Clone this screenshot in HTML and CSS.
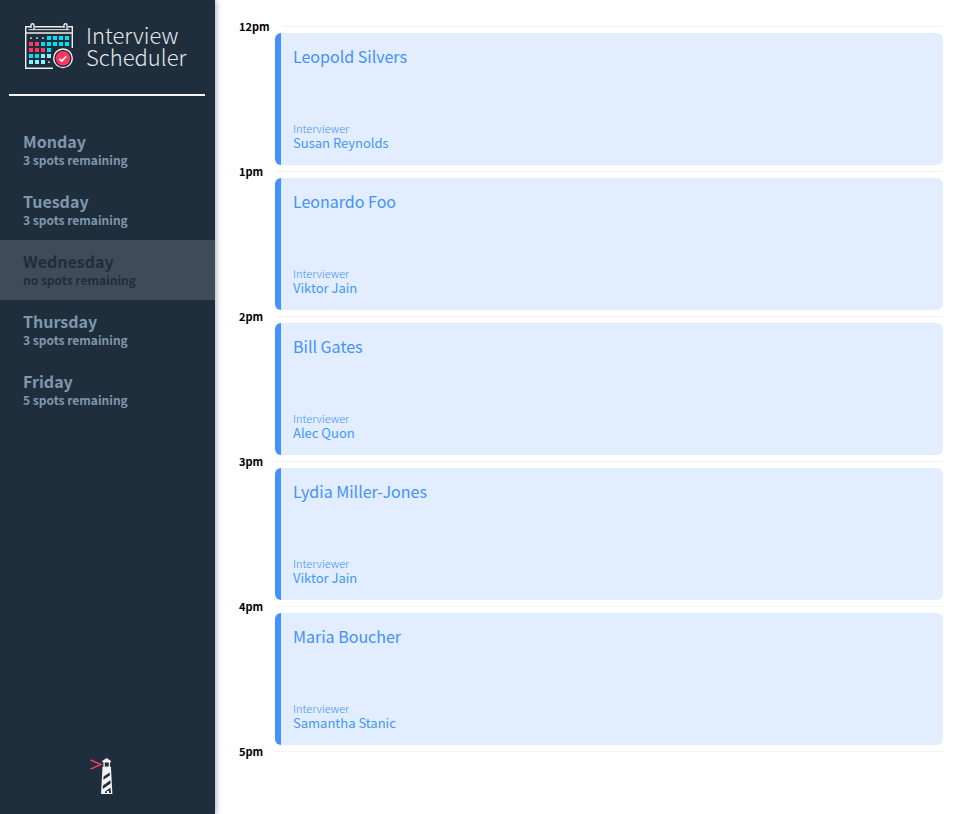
FILE: index.html
```html
<!DOCTYPE html>
<html lang="en">
<head>
<meta charset="utf-8">
<meta name="viewport" content="width=device-width, initial-scale=1">
<title>Interview Scheduler</title>
<link rel="stylesheet" href="styles.css">
</head>
<body>
<div class="layout">
  <aside class="sidebar">
    <div class="brand">
      <svg class="brand__icon" viewBox="24 22 50 48" aria-hidden="true">
        <g fill="none" stroke="#f0f0f0" stroke-width="1.4">
          <path d="M31 26.7H25.7V68.2H53M35 26.7H63.5M68 26.7H72.3V48M25.7 33H72.3"/>
          <path d="M28.5 29.7H69.5" stroke-width="1"/>
          <path d="M31 28V25.2a1.5 1.5 0 0 1 3 0V29.5M64 28V25.2a1.5 1.5 0 0 1 3 0V29.5"/>
        </g>
        <path fill="#f0f0f0" d="M30 37.4h2v1.4h-2zM36 37.4h2v1.4h-2zM42 37.4h2v1.4h-2zM48 61.4h2v1.4h-2z"/>
        <path fill="#00e1f5" d="M47 36h4v4h-4zM53 36h4v4h-4zM59 36h4v4h-4zM65 36h4v4h-4zM41 42h4v4h-4zM47 42h4v4h-4zM53 42h4v4h-4zM59 42h4v4h-4zM65 42h4v4h-4zM47 48h4v4h-4zM29 54h4v4h-4zM35 54h4v4h-4z"/>
        <path fill="#ff375f" d="M29 42h4v4h-4zM35 42h4v4h-4zM29 48h4v4h-4zM35 48h4v4h-4zM41 48h4v4h-4z"/>
        <path fill="#8af3fa" d="M41 54h4v4h-4zM47 54h4v4h-4zM29 60h4v4h-4zM35 60h4v4h-4zM41 60h4v4h-4z"/>
        <circle cx="63" cy="58.3" r="9.3" fill="#1f2e3d" stroke="#f0f0f0" stroke-width="1.4"/>
        <circle cx="63" cy="58.3" r="7.2" fill="#ff375f"/>
        <path d="M59.5 58.8l2.3 2.2 4.4-4.6" fill="none" stroke="#fff" stroke-width="1.6"/>
      </svg>
      <span class="brand__name">Interview<br>Scheduler</span>
    </div>
    <hr class="sidebar__rule">
    <nav class="days">
      <a class="day" href="#monday"><span class="day__name">Monday</span><span class="day__spots">3 spots remaining</span></a>
      <a class="day" href="#tuesday"><span class="day__name">Tuesday</span><span class="day__spots">3 spots remaining</span></a>
      <a class="day day--selected" href="#wednesday" aria-current="true"><span class="day__name">Wednesday</span><span class="day__spots">no spots remaining</span></a>
      <a class="day" href="#thursday"><span class="day__name">Thursday</span><span class="day__spots">3 spots remaining</span></a>
      <a class="day" href="#friday"><span class="day__name">Friday</span><span class="day__spots">5 spots remaining</span></a>
    </nav>
    <svg class="lighthouse" viewBox="88 757 28 38" aria-hidden="true">
      <path d="M90.5 760l10.5 4.5-10.5 4.7" fill="none" stroke="#fa3c5f" stroke-width="1.4"/>
      <path fill="#f2f2f2" d="M106.6 758l4.4 3v1.2h-1v4.6h1v1.6l1.4 25.6h-11.4l1.4-25.6v-1.6h1v-4.6h-1.2v-1.2z"/>
      <path fill="#1f2e3d" d="M104.8 762.6h4v4h-4zM103.6 776.4l6-4 .3 3.2-6.6 4.2zM103 785.4l7.3-5.2.3 3.2-7.9 5.6zM105 793l.2-1.4 5.2-3.8.6 5.2z"/>
      <path fill="#f2f2f2" d="M106.8 791h2.2v2.2h-2.2z"/>
    </svg>
  </aside>
  <main class="schedule">
    <section class="slot">
      <header class="slot__header"><h2 class="slot__time">12pm</h2><hr class="slot__rule"></header>
      <article class="card"><h3 class="card__student">Leopold Silvers</h3><div><h4 class="card__label">Interviewer</h4><p class="card__interviewer">Susan Reynolds</p></div></article>
    </section>
    <section class="slot">
      <header class="slot__header"><h2 class="slot__time">1pm</h2><hr class="slot__rule"></header>
      <article class="card"><h3 class="card__student">Leonardo Foo</h3><div><h4 class="card__label">Interviewer</h4><p class="card__interviewer">Viktor Jain</p></div></article>
    </section>
    <section class="slot">
      <header class="slot__header"><h2 class="slot__time">2pm</h2><hr class="slot__rule"></header>
      <article class="card"><h3 class="card__student">Bill Gates</h3><div><h4 class="card__label">Interviewer</h4><p class="card__interviewer">Alec Quon</p></div></article>
    </section>
    <section class="slot">
      <header class="slot__header"><h2 class="slot__time">3pm</h2><hr class="slot__rule"></header>
      <article class="card"><h3 class="card__student">Lydia Miller-Jones</h3><div><h4 class="card__label">Interviewer</h4><p class="card__interviewer">Viktor Jain</p></div></article>
    </section>
    <section class="slot">
      <header class="slot__header"><h2 class="slot__time">4pm</h2><hr class="slot__rule"></header>
      <article class="card"><h3 class="card__student">Maria Boucher</h3><div><h4 class="card__label">Interviewer</h4><p class="card__interviewer">Samantha Stanic</p></div></article>
    </section>
    <section class="slot">
      <header class="slot__header"><h2 class="slot__time">5pm</h2><hr class="slot__rule"></header>
    </section>
  </main>
</div>
</body>
</html>
```
FILE: styles.css
```css
*, *::before, *::after {
  box-sizing: border-box;
}

body, h2, h3, h4, p, hr {
  margin: 0;
}

body {
  background: #fff;
  color: #000;
  font-family: "Noto Sans CJK JP", "Noto Sans", sans-serif;
}

hr {
  border: 0;
}

.layout {
  display: flex;
  min-height: 100vh;
}

.sidebar {
  display: flex;
  flex: 0 0 215px;
  flex-direction: column;
  padding: 22px 0 19px;
  background: #1f2e3d;
  box-shadow: 1px 0 6px rgba(31, 46, 61, 0.4);
}

.brand {
  display: flex;
  align-items: flex-start;
  gap: 12px;
  padding-left: 24px;
}

.brand__icon {
  width: 50px;
  height: 48px;
}

.brand__name {
  padding-top: 1px;
  color: #e6e8ea;
  font-size: 22px;
  font-weight: 300;
  line-height: 22px;
}

.sidebar__rule {
  height: 2px;
  margin: 24px 10px 24px 9px;
  background: #f5f5f5;
}

.day {
  display: flex;
  flex-direction: column;
  height: 60px;
  padding: 12px 23px;
  color: #7f97ad;
  font-weight: 700;
  text-decoration: none;
}

.day--selected {
  background: #3e4c59;
  color: #1f2e3d;
}

.day__name {
  font-size: 16px;
  line-height: 18px;
}

.day__spots {
  font-size: 12px;
  line-height: 20px;
}

.lighthouse {
  width: 28px;
  height: 38px;
  margin: auto auto 0 88px;
}

.schedule {
  flex: 1;
  min-width: 0;
  padding: 20px 19px 20px 24px;
}

.slot__header {
  display: flex;
  align-items: center;
  gap: 12px;
  height: 13px;
}

.slot__time {
  font-size: 11px;
  font-weight: 700;
  line-height: 13px;
}

.slot__rule {
  flex: 1;
  height: 1px;
  background: #f2f2f2;
}

.card {
  display: flex;
  flex-direction: column;
  justify-content: space-between;
  min-height: 132px;
  margin-left: 36px;
  padding: 12px 12px 14px;
  border-left: 6px solid #4291ff;
  border-radius: 6px;
  background: #e2eeff;
  color: #4291ff;
}

.card__student {
  font-size: 16px;
  font-weight: 400;
  line-height: 22px;
}

.card__label {
  font-size: 11px;
  font-weight: 300;
  line-height: 14px;
}

.card__interviewer {
  color: #3f97fb;
  font-size: 13px;
  line-height: 16px;
}
```
